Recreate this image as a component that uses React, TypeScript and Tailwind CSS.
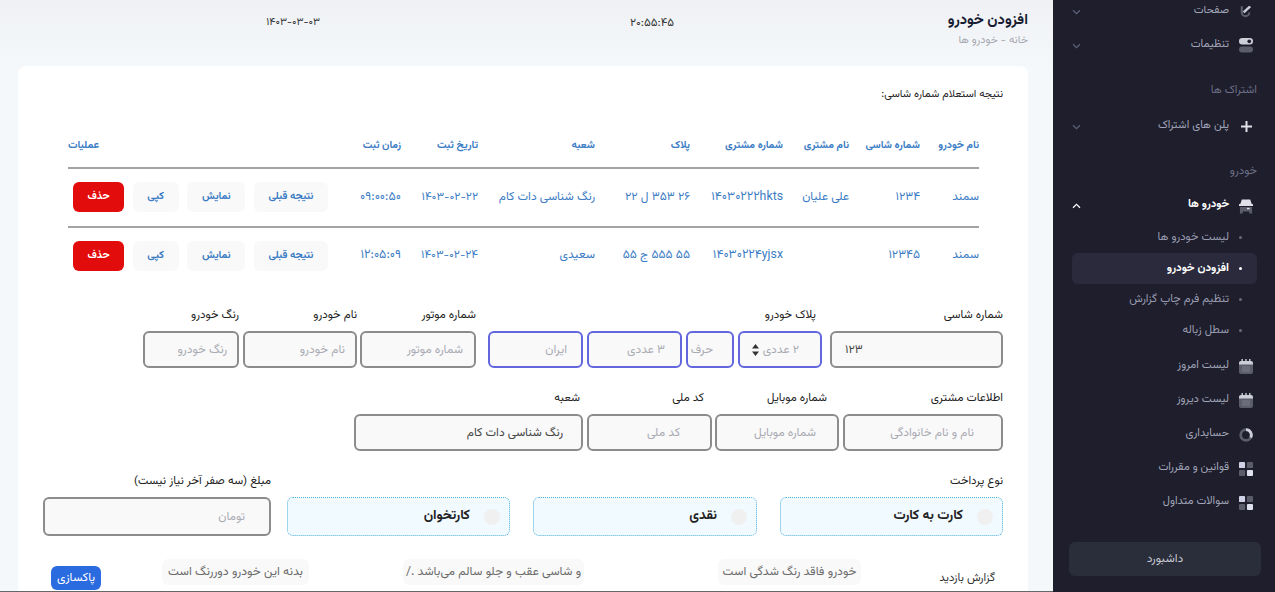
import React from "react";

const font = "font-['Vazirmatn','Noto_Sans_Arabic','DejaVu_Sans',sans-serif]";

const Chevron = ({ up = false, bright = false }: { up?: boolean; bright?: boolean }) => (
  <svg width="9" height="6" viewBox="0 0 9 6" fill="none" stroke={bright ? "#ffffff" : "#5e6278"} strokeWidth="1.2" className={up ? "rotate-180" : ""}>
    <path d="M1 1.2 4.5 4.6 8 1.2" />
  </svg>
);

const IconCalendar = () => (
  <svg width="14" height="15" viewBox="0 0 14 15">
    <rect x="0" y="3" width="14" height="12" rx="2" fill="#5b5d6b" />
    <path d="M0 5.5V4a2 2 0 0 1 2-2h10a2 2 0 0 1 2 2v1.5z" fill="#cdcfd8" />
    <rect x="2.5" y="0" width="1.4" height="3" fill="#cdcfd8" />
    <rect x="6.3" y="0" width="1.4" height="3" fill="#cdcfd8" />
    <rect x="10.1" y="0" width="1.4" height="3" fill="#cdcfd8" />
    <path d="M3.5 8h7M3.5 10h7M3.5 12h7" stroke="#9c9eab" strokeWidth="1" strokeDasharray="1 1" />
  </svg>
);
const IconGrid = () => (
  <svg width="14" height="14" viewBox="0 0 15 15">
    <rect x="0" y="0" width="6.5" height="6.5" rx="1" fill="#cfd2e6" />
    <rect x="8.5" y="0" width="6.5" height="6.5" rx="1" fill="#5b5d6b" />
    <rect x="0" y="8.5" width="6.5" height="6.5" rx="1" fill="#5b5d6b" />
    <rect x="8.5" y="8.5" width="6.5" height="6.5" rx="1" fill="#dfe1ee" />
  </svg>
);
const IconDonut = () => (
  <svg width="14" height="14" viewBox="0 0 15 15" fill="none">
    <circle cx="7.5" cy="7.5" r="5.7" stroke="#5b5d6b" strokeWidth="3" />
    <path d="M7.5 1.8a5.7 5.7 0 0 1 5 8.4" stroke="#cdcfd8" strokeWidth="3" />
  </svg>
);
const IconToggle = () => (
  <svg width="14" height="15" viewBox="0 0 15 16">
    <rect x="0" y="0" width="15" height="7" rx="3.5" fill="#cdcfd8" />
    <circle cx="11" cy="3.5" r="2" fill="#1e1e2d" />
    <rect x="0" y="9" width="15" height="6.5" rx="3.2" fill="#5b5d6b" />
  </svg>
);
const IconPen = () => (
  <svg width="14" height="15" viewBox="0 0 15 15" fill="none">
    <path d="M3 2v6.5a4 4 0 0 0 8 0" stroke="#5b5d6b" strokeWidth="2.4" />
    <path d="M5 8.5 12 2" stroke="#cdcfd8" strokeWidth="2.6" />
  </svg>
);
const IconPlus = () => (
  <svg width="11" height="11" viewBox="0 0 11 11">
    <path d="M0 5.5h11M5.5 0v11" stroke="#dfe0e8" strokeWidth="2" />
  </svg>
);
const IconCar = () => (
  <svg width="15" height="16" viewBox="0 0 15 16">
    <path d="M3 1h9l2 6H1z" fill="#dfe0e8" />
    <rect x="0" y="6" width="15" height="2" fill="#dfe0e8" />
    <path d="M1 9h13v7h-3v-2H4v2H1z" fill="#5b5d6b" />
    <rect x="8.5" y="10" width="3" height="1.5" fill="#dfe0e8" />
  </svg>
);

const Item = ({ icon, label, cls, chev, bright }: { icon: React.ReactNode; label: string; cls: string; chev?: boolean; bright?: boolean }) => (
  <div className={`flex items-center h-[35px] pr-[22px] pl-[19px] ${cls}`}>
    <span className="w-[14px] flex justify-center shrink-0">{icon}</span>
    <span className={`mr-[10px] text-[11.2px] ${bright ? "text-white font-bold" : "text-[#a1a5b7]"}`}>{label}</span>
    {chev && <span className="mr-auto"><Chevron up={bright} bright={bright} /></span>}
  </div>
);

const SubItem = ({ label, active, cls }: { label: string; active?: boolean; cls: string }) => (
  <div className={`flex items-center h-[31px] mr-[18px] ml-[19px] pr-[15px] rounded-md ${active ? "bg-[#2a2a3c]" : ""} ${cls}`}>
    <span className={`w-[3px] h-[3px] rounded-full ${active ? "bg-white" : "bg-[#686b80]"}`} />
    <span className={`mr-[10px] text-[11.4px] ${active ? "text-white font-bold" : "text-[#9a9db0]"}`}>{label}</span>
  </div>
);

const Sidebar = () => (
  <aside className="relative w-[222px] shrink-0 h-full bg-[#1e1e2d] overflow-hidden flex flex-col">
    <div className="-mt-[6px]">
      <Item icon={<IconPen />} label="صفحات" chev cls="" />
      <Item icon={<IconToggle />} label="تنظیمات" chev cls="-mt-px" />
      <div className="mt-[14px] h-[27px] flex items-center pr-[18px] text-[11.5px] text-[#6d7086]">اشتراک ها</div>
      <Item icon={<IconPlus />} label="پلن های اشتراک" chev cls="mt-[5px]" />
      <div className="mt-[14px] h-[27px] flex items-center pr-[18px] text-[11.5px] text-[#6d7086]">خودرو</div>
      <Item icon={<IconCar />} label="خودرو ها" chev bright cls="mt-[3px]" />
      <SubItem label="لیست خودرو ها" cls="-mt-px" />
      <SubItem label="افزودن خودرو" active cls="" />
      <SubItem label="تنظیم فرم چاپ گزارش" cls="" />
      <SubItem label="سطل زباله" cls="" />
      <Item icon={<IconCalendar />} label="لیست امروز" cls="mt-[3px]" />
      <Item icon={<IconCalendar />} label="لیست دیروز" cls="-mt-px" />
      <Item icon={<IconDonut />} label="حسابداری" cls="-mt-px" />
      <Item icon={<IconGrid />} label="قوانین و مقررات" cls="-mt-px" />
      <Item icon={<IconGrid />} label="سوالات متداول" cls="-mt-px" />
      <div className="mr-[14px] mt-[22px] h-[34px] w-[192px] rounded-md bg-[#2a2d3a] flex items-center justify-center text-[12px] text-[#c5c7d2]">داشبورد</div>
    </div>
    <div className="absolute top-0 inset-x-0 h-[6px] bg-[#1e1e2d]" />
  </aside>
);

const cols = "grid grid-cols-[59px_71px_66px_93px_95px_117px_77px_61px_272px] items-center";

const Th = ({ children, cls = "" }: { children: React.ReactNode; cls?: string }) => (
  <div className={`text-[10.5px] font-bold text-[#3b7cc4] whitespace-nowrap pt-[3px] ${cls}`}>{children}</div>
);
const Btn = ({ children, w }: { children: React.ReactNode; w: string }) => (
  <button className={`h-[30px] ${w} rounded-md bg-[#f9f9f9] text-[10.5px] font-bold text-[#3b7cc4]`}>{children}</button>
);

const sizes = ["text-[12px]", "text-[12px]", "text-[12px]", "text-[12.3px]", "text-[12px]", "text-[12px]", "text-[11.6px]", "text-[12.4px]"];

const Row = ({ d, cls, pb }: { d: string[]; cls: string; pb: string }) => (
  <div className={`${cols} ${cls}`}>
    {d.map((t, i) => (
      <div key={i} className={`leading-[16px] text-[#3b7cc4] whitespace-nowrap ${pb} ${sizes[i]}`}>{t}</div>
    ))}
    <div className="flex gap-[8.67px] justify-end pl-[5px] pb-[2px]">
      <Btn w="w-[74px]">نتیجه قبلی</Btn>
      <Btn w="w-[58px]">نمایش</Btn>
      <Btn w="w-[46px]">کپی</Btn>
      <button className="h-[30px] w-[51px] rounded-md bg-[#e30c0c] text-[10.5px] font-bold text-white">حذف</button>
    </div>
  </div>
);

const inputBase = "h-[37px] rounded-md bg-[#f9f9f9] text-[12px] outline-none placeholder:text-[#a9abb3] text-[#444]";

const Field = ({ label, ph, w, pr, lpr = "", value }: { label: string; ph?: string; w: string; pr: string; lpr?: string; value?: string }) => (
  <div className={`${w} shrink-0`}>
    <div className={`h-[16px] mb-[8px] text-[11.6px] leading-[16px] text-[#222] ${lpr}`}>{label}</div>
    <input readOnly placeholder={ph} defaultValue={value} className={`${inputBase} w-full border-2 border-[#8c8c8c] ${pr}`} />
  </div>
);

const Blue = ({ ph, w, pr }: { ph: string; w: string; pr: string }) => (
  <input readOnly placeholder={ph} className={`${inputBase} ${w} shrink-0 border-2 border-[#6267de] ${pr}`} />
);

const Radio = ({ label, w }: { label: string; w: string }) => (
  <div className={`${w} shrink-0 h-[39px] rounded-md border border-dotted border-[#4fb0dc] bg-[#f1faff] flex items-center pr-[9px]`}>
    <span className="w-[16px] h-[16px] rounded-full bg-[#f0f0f0]" />
    <span className="mr-[14px] text-[13.5px] font-bold text-[#222]">{label}</span>
  </div>
);

const Chip = ({ children, w, cls = "" }: { children: React.ReactNode; w: string; cls?: string }) => (
  <div className={`${w} shrink-0 h-[26px] rounded-md bg-[#f9f9f9] flex items-center justify-center text-[12.2px] text-[#6b6b6b] whitespace-nowrap ${cls}`}>{children}</div>
);

export default function App() {
  return (
    <div dir="rtl" className={`relative w-[1275px] h-[592px] overflow-hidden flex bg-[#f5f8fb] ${font}`}>
      <Sidebar />
      <main className="flex-1 h-full overflow-hidden bg-gradient-to-b from-[#eff1f4] to-[#f5f8fb] to-[70px]">
        <header className="h-[66px] flex pr-[25px] pt-[12px]">
          <div className="w-[80px] shrink-0">
            <div className="text-[14.7px] font-bold leading-[18px] text-[#181c32] whitespace-nowrap">افزودن خودرو</div>
            <div className="mt-[4px] text-[11px] leading-[14px] text-[#a8a8b0] whitespace-nowrap">خانه - خودرو ها</div>
          </div>
          <div className="mr-[274px] w-[44px] pt-[3px] text-[11.5px] text-[#333] leading-[16px]">۲۰:۵۵:۴۵</div>
          <div className="mr-[310px] w-[54px] pt-[3px] text-[10.7px] text-[#333] leading-[16px] whitespace-nowrap">۱۴۰۳-۰۳-۰۳</div>
        </header>
        <section className="mr-[25px] ml-[18px] bg-white rounded-t-lg px-[25px] pt-[21px] h-[526px]">
          <div className="h-[16px] text-[10.8px] leading-[16px] text-[#222]">نتیجه استعلام شماره شاسی:</div>
          <div className="mt-[19px] ml-[25px] mr-[24px]">
            <div className={`${cols} h-[47px] border-b-2 border-[#a3a3a3]`}>
              <Th>نام خودرو</Th><Th>شماره شاسی</Th><Th>نام مشتری</Th><Th>شماره مشتری</Th><Th>پلاک</Th><Th>شعبه</Th><Th>تاریخ ثبت</Th><Th>زمان ثبت</Th>
              <Th cls="text-left">عملیات</Th>
            </div>
            <Row cls="h-[59px] border-b-2 border-[#a3a3a3]" pb="pb-[1px]" d={["سمند", "۱۲۳۴", "علی علیان", "۱۴۰۳۰۲۲۲hkts", "۲۶ ۳۵۳ ل ۲۲", "رنگ شناسی دات کام", "۱۴۰۳-۰۲-۲۲", "۰۹:۰۰:۵۰"]} />
            <Row cls="h-[58px]" pb="pb-[5px]" d={["سمند", "۱۲۳۴۵", "", "۱۴۰۳۰۲۲۴yjsx", "۵۵ ۵۵۵ ج ۵۵", "سعیدی", "۱۴۰۳-۰۲-۲۴", "۱۲:۰۵:۰۹"]} />
          </div>
          <div className="mt-[21px] flex">
            <Field label="شماره شاسی" w="w-[173px]" pr="pl-[13px] text-left" value="۱۲۳" />
            <div className="w-[334px] mr-[8px] shrink-0">
              <div className="h-[16px] mb-[8px] pr-[6px] text-[11.6px] leading-[16px] text-[#222]">پلاک خودرو</div>
              <div className="flex gap-[4px]">
                <div className="relative w-[84px] shrink-0">
                  <input readOnly placeholder="۲ عددی" className={`${inputBase} w-full border-2 border-[#6267de] pr-[21px] bg-[#f2f2f2]`} />
                  <svg width="7" height="12" viewBox="0 0 7 12" className="absolute left-[14px] top-[13px]"><path d="M3.5 0 7 4.5H0zM3.5 12 0 7.5h7z" fill="#333" /></svg>
                </div>
                <Blue ph="حرف" w="w-[48px]" pr="pr-[19px]" />
                <Blue ph="۳ عددی" w="w-[95px]" pr="pr-[15px]" />
                <Blue ph="ایران" w="w-[95px]" pr="pr-[14px]" />
              </div>
            </div>
            <Field label="شماره موتور" ph="شماره موتور" w="w-[116px] mr-[12px]" pr="pr-[11px]" />
            <Field label="نام خودرو" ph="نام خودرو" w="w-[114px] mr-[3px]" pr="pr-[10px]" />
            <Field label="رنگ خودرو" ph="رنگ خودرو" w="w-[96px] mr-[4px]" pr="pr-[10px]" />
          </div>
          <div className="mt-[22px] flex">
            <Field label="اطلاعات مشتری" ph="نام و نام خانوادگی" w="w-[160px]" pr="pr-[27px]" />
            <Field label="شماره موبایل" ph="شماره موبایل" w="w-[124px] mr-[4px]" lpr="pr-[12px]" pr="pr-[21px]" />
            <Field label="کد ملی" ph="کد ملی" w="w-[125px] mr-[3px]" lpr="pr-[8px]" pr="pr-[30px]" />
            <Field label="شعبه" value="رنگ شناسی دات کام" w="w-[229px] mr-[4px]" lpr="pr-[3px]" pr="pr-[18px]" />
          </div>
          <div className="mt-[22px] flex">
            <div>
              <div className="h-[16px] mb-[8px] text-[11.6px] leading-[16px] text-[#222]">نوع پرداخت</div>
              <div className="flex">
                <Radio label="کارت به کارت" w="w-[223px]" />
                <Radio label="نقدی" w="w-[224px] mr-[23px]" />
                <Radio label="کارتخوان" w="w-[223px] mr-[23px]" />
              </div>
            </div>
            <div className="w-[228px] mr-[16px] shrink-0">
              <div className="h-[16px] mb-[8px] text-[11.6px] leading-[16px] text-[#222]">مبلغ (سه صفر آخر نیاز نیست)</div>
              <input readOnly placeholder="تومان" className={`${inputBase} h-[39px] w-full border-2 border-[#8c8c8c] pr-[24px]`} />
            </div>
          </div>
          <div className="mt-[23px] flex">
            <div className="w-[142px] shrink-0 pr-[8px] pt-[11px] text-[11.5px] text-[#333] leading-[16px]">گزارش بازدید</div>
            <Chip w="w-[143px]">خودرو فاقد رنگ شدگی است</Chip>
            <Chip w="w-[181px] mr-[134px]">و شاسی عقب و جلو سالم می‌باشد ./</Chip>
            <Chip w="w-[147px] mr-[94px]">بدنه این خودرو دوررنگ است</Chip>
          </div>
        </section>
      </main>
      <div className="absolute left-0 bottom-0 w-[1053px] h-px bg-[#666]" />
      <button className="absolute left-[51px] top-[566px] w-[50px] h-[24px] rounded-md bg-[#2a6be0] text-[12px] text-white">پاکسازی</button>
    </div>
  );
}
